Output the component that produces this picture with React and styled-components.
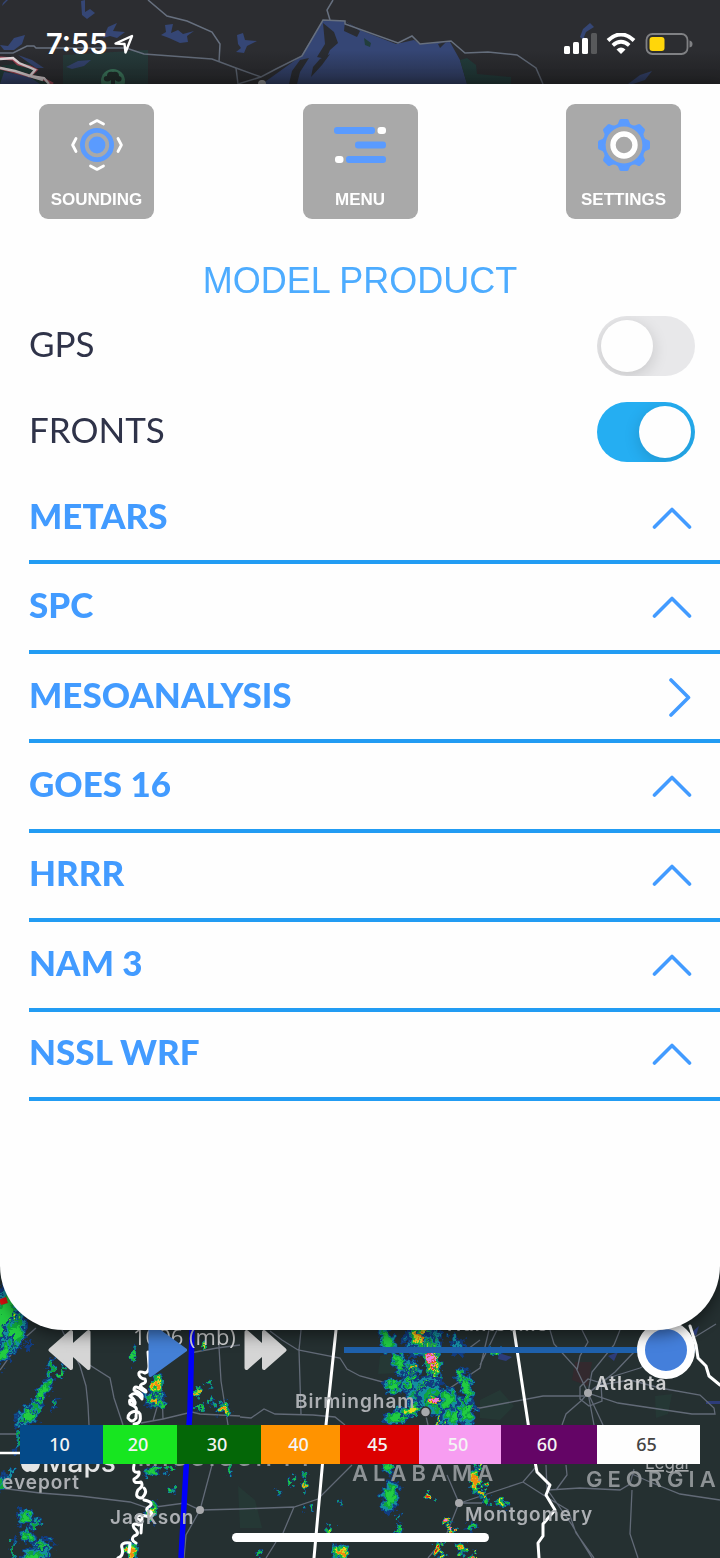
import React, { useState } from 'react';
import styled, { createGlobalStyle } from 'styled-components';

const GlobalStyle = createGlobalStyle`
  body {
    margin: 0;
    background: #253031;
    font-family: 'Liberation Sans', Arial, sans-serif;
  }

  *, *::before, *::after {
    box-sizing: border-box;
  }
`;

const Screen = styled.div`
  display: flex;
  flex-direction: column;
  min-height: 100vh;
  overflow: hidden;
`;

const MapLayer = styled.svg`
  position: absolute;
  inset: 0;
  width: 100%;
  height: 100%;
  font-family: Inter, sans-serif;
  font-weight: 600;
`;

const StatusBar = styled.header`
  position: relative;
  display: flex;
  justify-content: space-between;
  height: 84px;
  padding: 28px 27px 0 46px;
  background: #2c2d31;
`;

const StatusGroup = styled.div`
  position: relative;
  display: flex;
  align-items: center;
  gap: ${props => props.$gap}px;
  height: 32px;
`;

const Clock = styled.time`
  font-family: Inter, sans-serif;
  font-weight: 600;
  font-size: 29px;
  line-height: 32px;
  color: #fff;
`;

const Panel = styled.main`
  position: relative;
  z-index: 1;
  padding: 20px 0 229px;
  border-radius: 0 0 64px 64px;
  background: #fefefe;
  box-shadow: 0 4px 16px rgba(0, 0, 0, 0.5);
`;

const Toolbar = styled.nav`
  display: flex;
  justify-content: space-between;
  padding: 0 39px;
`;

const ToolButton = styled.button`
  display: flex;
  flex-direction: column;
  align-items: center;
  justify-content: space-between;
  width: 115px;
  height: 115px;
  padding: 15px 0 8px;
  border: 0;
  border-radius: 9px;
  background: #a9a9a9;
  color: #fff;
  font-family: inherit;
  font-weight: bold;
  font-size: 17px;
  line-height: 22px;
`;

const Title = styled.h1`
  margin: 41px 0 1px;
  font-weight: normal;
  font-size: 36px;
  line-height: 42px;
  text-align: center;
  color: #4dacff;
`;

const SwitchRow = styled.label`
  display: flex;
  align-items: center;
  justify-content: space-between;
  height: 86px;
  padding: 0 25px 0 29px;
  color: #2f3349;
`;

const RowText = styled.span`
  padding-bottom: 6px;
  font-family: Lato, sans-serif;
  font-weight: ${props => (props.$heavy ? 900 : 400)};
  font-size: 35px;
  line-height: 42px;
`;

const Switch = styled.input`
  appearance: none;
  display: flex;
  align-items: center;
  width: 98px;
  height: 60px;
  margin: 0;
  padding: 0 4px;
  border-radius: 30px;
  background: #e8e8ea;
  overflow: hidden;

  &::before {
    content: '';
    width: 52px;
    height: 52px;
    border-radius: 50%;
    background: #fefefe;
    box-shadow: 0 4px 16px rgba(0, 0, 0, 0.15);
  }

  &:checked {
    justify-content: flex-end;
    background: #25aef2;
  }
`;

const ProductList = styled.div`
  display: grid;
  grid-auto-rows: 1fr;
  min-height: 626px;
  padding-left: 29px;
`;

const ProductRow = styled.button`
  display: flex;
  align-items: center;
  justify-content: space-between;
  padding: 0 28px 0 0;
  border: 0;
  border-bottom: 4px solid #229cf3;
  background: none;
  color: #429bff;
`;

const Dock = styled.footer`
  position: relative;
  display: flex;
  flex: 1;
  flex-direction: column;
  margin-top: -70px;
  padding: 61px 0 16px;
  background: #253031;
`;

const Player = styled.div`
  position: relative;
  display: flex;
  align-items: center;
  gap: 57px;
  padding: 0 25px 0 48px;
`;

const PlayerButton = styled.button`
  display: flex;
  padding: 0;
  border: 0;
  background: none;
  color: ${props => (props.$active ? '#4480d6' : '#d5d5d5')};
`;

const Timeline = styled.input`
  appearance: none;
  flex: 1;
  min-width: 0;
  height: 58px;
  margin: 0;
  background: none;

  &::-webkit-slider-runnable-track {
    height: 58px;
    background: linear-gradient(#1f61ad, #1f61ad) center / 100% 6px no-repeat;
  }

  &::-webkit-slider-thumb {
    appearance: none;
    width: 58px;
    height: 58px;
    border: 8px solid #fff;
    border-radius: 50%;
    background: #447fdb;
  }
`;

const Legend = styled.ul`
  position: relative;
  display: flex;
  height: 39px;
  margin: 46px 20px 0;
  padding: 0;
  list-style: none;
`;

const LegendItem = styled.li`
  flex: ${props => props.$span} 1 0;
  background: ${props => props.$fill};
  color: ${props => props.$ink || '#f4f4f4'};
  font-family: 'Noto Sans', sans-serif;
  font-weight: 500;
  font-size: 18px;
  line-height: 39px;
  text-align: center;
  text-indent: -4px;
`;

const HomeIndicator = styled.div`
  position: relative;
  width: 257px;
  height: 9px;
  margin: auto auto 0;
  border-radius: 5px;
  background: #fff;
`;

const SoundingIcon = () => (
  <svg width="52" height="52" viewBox="0 0 52 52" fill="none" aria-hidden="true">
    <circle cx="26" cy="26" r="14.6" stroke="#5a9bff" strokeWidth="4.8" />
    <circle cx="26" cy="26" r="8.4" fill="#5a9bff" />
    <g stroke="#fff" strokeWidth="2.8" strokeLinecap="round" strokeLinejoin="round">
      <path d="M19.5 5 26 1.6 32.5 5" />
      <path d="M19.5 47 26 50.4 32.5 47" />
      <path d="M5 19.500 1.600 26 5 32.500" />
      <path d="M47 19.500 50.400 26 47 32.500" />
    </g>
  </svg>
);

const MenuIcon = () => (
  <svg width="52" height="52" viewBox="0 0 52 52" aria-hidden="true">
    <g fill="#5a9bff">
      <rect y="8" width="41" height="7" rx="3" />
      <rect x="21" y="22.5" width="31" height="7" rx="3" />
      <rect x="12" y="37" width="40" height="7" rx="3" />
    </g>
    <g fill="#fff">
      <rect x="43.5" y="8" width="8.5" height="7" rx="3" />
      <rect x="1" y="37" width="8.5" height="7" rx="3" />
    </g>
  </svg>
);

const SettingsIcon = () => (
  <svg width="52" height="52" viewBox="0 0 52 52" aria-hidden="true">
    <g fill="#5a9bff">
      {[0, 45, 90, 135, 180, 225, 270, 315].map(angle => (
        <path
          key={angle}
          transform={`rotate(${angle} 26 26)`}
          d="M18 6 Q20.5 5 21 2 Q21.5 0 23 0 H29 Q30.5 0 31 2 Q31.5 5 34 6 V9 H18Z"
        />
      ))}
    </g>
    <circle cx="26" cy="26" r="19.6" fill="none" stroke="#5a9bff" strokeWidth="3.5" />
    <circle cx="26" cy="26" r="18.4" fill="#a9a9a9" />
    <circle cx="26" cy="26" r="11" fill="none" stroke="#fff" strokeWidth="5.4" />
  </svg>
);

const Chevron = ({ direction }) => (
  <svg width="40" height="40" viewBox="0 0 40 40" fill="none" aria-hidden="true">
    <path
      d={direction === 'up' ? 'M2.5 29 20 11.5 37.5 29' : 'M19 3 36.5 20.5 19 38'}
      stroke="#429bff"
      strokeWidth="3.6"
      strokeLinecap="round"
      strokeLinejoin="round"
    />
  </svg>
);

const LocationIcon = () => (
  <svg width="20" height="20" viewBox="0 0 20 20" fill="none" aria-hidden="true">
    <path
      d="M1.5 9.5 18 2 11.500 18.500 10.500 10Z"
      stroke="#fff"
      strokeWidth="2.4"
      strokeLinejoin="round"
    />
  </svg>
);

const SignalIcon = () => (
  <svg width="33" height="22" viewBox="0 0 33 22" fill="#fff" aria-hidden="true">
    <rect y="13" width="6" height="8" rx="1.5" />
    <rect x="9" y="9" width="6" height="12" rx="1.5" />
    <rect x="18" y="5" width="6" height="16" rx="1.5" />
    <rect x="27" width="6" height="21" rx="1.5" fill="#58595b" />
  </svg>
);

const WifiIcon = () => (
  <svg width="30" height="22" viewBox="0 0 30 22" fill="none" aria-hidden="true">
    <path d="M2 7.5 Q15-4.5 28 7.5" stroke="#fff" strokeWidth="4" />
    <path d="M6.800 12.300 Q15 5 23.200 12.300" stroke="#fff" strokeWidth="3.800" />
    <path d="M10.5 16.5 Q15 12.5 19.5 16.5 L15 21Z" fill="#fff" />
  </svg>
);

const BatteryIcon = () => (
  <svg width="48" height="22" viewBox="0 0 48 22" aria-hidden="true">
    <rect x="1.5" y="1" width="41" height="20" rx="6" fill="none" stroke="#808184" strokeWidth="1.8" />
    <rect x="4.5" y="4" width="15" height="14" rx="3" fill="#ffd60a" />
    <path d="M44.5 7.5 Q47.5 8 47.5 11 T44.5 14.5Z" fill="#808184" />
  </svg>
);

const RewindIcon = () => (
  <svg width="43" height="42" viewBox="0 0 43 42" fill="currentColor" stroke="currentColor" strokeWidth="4" strokeLinejoin="round" aria-hidden="true">
    <path d="M2.5 21 23 3V39Z" />
    <path d="M20 21 40.5 3V39Z" />
  </svg>
);

const PlayIcon = () => (
  <svg width="39" height="56" viewBox="0 0 39 56" fill="currentColor" stroke="currentColor" strokeWidth="4" strokeLinejoin="round" aria-hidden="true">
    <path d="M2.5 3V53L37 28Z" />
  </svg>
);

const ForwardIcon = () => (
  <svg width="43" height="42" viewBox="0 0 43 42" fill="currentColor" stroke="currentColor" strokeWidth="4" strokeLinejoin="round" aria-hidden="true">
    <path d="M2.5 3V39L23 21Z" />
    <path d="M20 3V39L40.5 21Z" />
  </svg>
);

const NorthMap = () => (
  <MapLayer viewBox="0 0 720 84" preserveAspectRatio="xMidYMax slice" aria-hidden="true">
    <defs>
      <linearGradient id="shade" x1="0" y1="0" x2="0" y2="1">
        <stop offset="0.6" stopColor="#111" stopOpacity="0" />
        <stop offset="1" stopColor="#111" stopOpacity="0.45" />
      </linearGradient>
    </defs>
    <path d="M63 55 148 50V84H63Z" fill="#263b3b" />
    <path d="M0 66 30 62 36 76 50 84H0Z" fill="#203c38" />
    <g fill="#354675">
      <path d="M323 20 345 21 360 30 396 44 414 40 420 44 450 42 460 60 467 84H262L301 56 323 20Z" />
      <path d="M81 1 85 0 85 12 90 9 95 13 87 19 82 15Z" />
      <path d="M103 38 108 27 117 23 113 31 125 32 117 38 110 36Z" />
      <path d="M161 35 166 32 165 25 173 24 171 33 178 30 183 34 194 31 187 36 188 42 180 43 169 38Z" />
      <path d="M236 52 241 48 238 44 237 35 243 33 245 40 257 41 247 46 244 53Z" />
      <path d="M8 46 14 38 25 35 22 44 14 50 4 50 0 45Z" />
      <path d="M66 67 78 61 91 60 84 66 72 69Z" />
      <path d="M4 72 28 76 40 84H0ZM18 55 32 60 44 68 36 68Z" />
      <path d="M580 37 583 29 590 23 594 27 586 32 584 37 586 42Z" />
      <path d="M628 84 640 75 652 71 645 80 633 84Z" />
      <path d="M2 6 8 0H6L3 3Z" />
    </g>
    <g fill="#2a2c31">
      <path d="M323 23 334 32 338 43 330 50 326 59 317 57 325 44Z" />
      <path d="M300 60 309 58 300 72 297 84H289L292 71Z" />
      <path d="M345 21 360 31 357 37 344 31ZM320 59 330 54 322 65 311 77 313 67ZM438 44 446 42 440 48Z" />
    </g>
    <path d="M460 60 467 58 476 65 477 74 511 77V84H467ZM364 38 371 43 370 47 365 45Z" fill="#223e3d" />
    <g fill="none" stroke="#67707f" strokeWidth="1.5">
      <path d="M148 0 167 16 187 21 212 32 220 44 219 62" />
      <path d="M0 53H13L27 46H34L36 48H126L144 54 212 59 236 68 261 77 276 69 302 56 323 20 345 21V24L398 43 412 36 420 44 451 41 465 53 488 52 517 55 536 68 543 84" />
      <path d="M333 0 327 10 330 20M236 68 238 84 261 77" />
    </g>
    <path d="M0 58 13 59 18 64 30 67 36 70 30 76 43 79 53 84M0 68 15 72 30 76 43 79" fill="none" stroke="#b54a5c" strokeWidth="3" />
    <path d="M0 59 13 58 19 63 31 68 35 70 30 76 44 78 49 84M0 68 15 71 30 76 43 80" fill="none" stroke="#f3eaec" strokeWidth="2.4" />
    <circle cx="113" cy="81" r="12" fill="#3f8264" />
    <path d="M104 80 Q103 76 107 76 Q107 71 113 72 Q119 71 119 76 Q123 77 121 81 Q118 83 115 80 L115 84H111V80 Q107 83 104 80Z" fill="#202e2b" />
    <circle cx="262" cy="84" r="4" fill="#a9abae" />
    <rect width="720" height="84" fill="url(#shade)" />
  </MapLayer>
);

const LEVELS = ['#123c80', '#1490a0', '#10a53c', '#22cc42', '#e8d820', '#f08a10', '#d81818', '#ee80dc'];

// x, y, rx, ry, rotation, strength (index of the innermost colour)
const CELLS = [
  [4, 58, 14, 34, 20, 3],
  [14, 75, 9, 20, 20, 3],
  [16, 58, 3, 4, 20, 4],
  [3, 94, 5, 16, 30, 3],
  [42, 134, 5, 18, 30, 3],
  [28, 156, 8, 11, 50, 3],
  [35, 147, 4, 6, 50, 2],
  [51, 108, 3, 9, 10, 2],
  [62, 112, 2, 6, 10, 3],
  [19, 176, 2, 14, 15, 2],
  [55, 143, 2, 6, 30, 2],
  [28, 84, 2, 6, 20, 0],
  [133, 96, 2, 8, 0, 3],
  [154, 138, 8, 7, 10, 3],
  [156, 141, 4, 4, 10, 5],
  [157, 125, 5, 9, 5, 5],
  [162, 144, 4, 3, 150, 3],
  [25, 257, 7, 7, 70, 3],
  [28, 277, 5, 7, 120, 3],
  [35, 264, 6, 3, 130, 2],
  [42, 290, 10, 8, 150, 3],
  [34, 298, 12, 8, 150, 3],
  [13, 290, 2, 11, 10, 2],
  [10, 214, 2, 7, 40, 1],
  [2, 222, 3, 8, 20, 2],
  [152, 252, 4, 10, 10, 4],
  [131, 292, 5, 9, 10, 5],
  [172, 230, 3, 4, 20, 3],
  [152, 211, 8, 3, 160, 3],
  [170, 209, 4, 2, 160, 3],
  [198, 132, 3, 4, 0, 5],
  [222, 149, 5, 6, 50, 5],
  [209, 124, 2, 2, 0, 3],
  [211, 140, 3, 3, 0, 3],
  [198, 148, 4, 2, 0, 3],
  [204, 85, 2, 5, 0, 4],
  [230, 208, 2, 5, 0, 3],
  [387, 80, 6, 13, 345, 3],
  [399, 103, 6, 11, 335, 3],
  [412, 110, 6, 9, 340, 3],
  [413, 108, 3, 3, 0, 5],
  [423, 80, 15, 15, 340, 4],
  [421, 76, 11, 12, 330, 5],
  [426, 74, 5, 8, 340, 6],
  [432, 100, 6, 24, 350, 6],
  [431, 98, 3, 16, 352, 7],
  [394, 127, 9, 5, 10, 3],
  [412, 124, 9, 9, 30, 3],
  [424, 132, 16, 12, 140, 3],
  [421, 129, 3, 8, 40, 5],
  [436, 140, 16, 13, 20, 3],
  [434, 140, 6, 5, 140, 7],
  [446, 133, 4, 5, 10, 6],
  [448, 140, 9, 9, 0, 3],
  [397, 157, 13, 6, 165, 3],
  [412, 150, 10, 5, 165, 4],
  [441, 159, 4, 6, 0, 5],
  [455, 156, 12, 8, 170, 3],
  [467, 150, 7, 14, 0, 3],
  [466, 127, 5, 16, 350, 3],
  [460, 115, 4, 6, 20, 3],
  [459, 88, 4, 8, 0, 1],
  [454, 78, 3, 5, 0, 1],
  [389, 206, 5, 7, 0, 3],
  [390, 236, 7, 15, 10, 3],
  [398, 258, 2, 4, 0, 2],
  [399, 271, 2, 4, 0, 3],
  [428, 237, 4, 4, 0, 6],
  [475, 221, 4, 12, 350, 5],
  [487, 224, 4, 4, 0, 6],
  [483, 235, 3, 3, 0, 5],
  [486, 242, 3, 4, 330, 3],
  [502, 244, 5, 4, 30, 4],
  [478, 206, 4, 3, 0, 4],
  [494, 91, 6, 3, 10, 4],
  [304, 226, 3, 4, 0, 5],
  [291, 220, 2, 4, 0, 3],
  [306, 216, 2, 3, 0, 2],
  [311, 248, 3, 3, 0, 3],
  [329, 270, 3, 3, 0, 4],
  [445, 261, 3, 4, 330, 7],
  [452, 269, 3, 6, 340, 7],
  [470, 268, 4, 4, 0, 3],
  [438, 288, 3, 6, 0, 6],
  [461, 287, 4, 6, 340, 5],
  [475, 297, 4, 3, 0, 7],
  [442, 297, 3, 4, 0, 4],
  [341, 293, 7, 9, 0, 5],
  [259, 294, 3, 3, 0, 3],
  [278, 233, 2, 3, 0, 2],
  [340, 241, 2, 2, 0, 2],
];

const StormCell = ({ cell: [x, y, rx, ry, turn, strength] }) => (
  <g transform={`translate(${x} ${y}) rotate(${turn})`}>
    {LEVELS.slice(0, strength + 1).map((fill, i) => {
      const size = 1.3 - i / (strength + 1);
      return <ellipse key={fill} rx={rx * size} ry={ry * size} fill={fill} />;
    })}
  </g>
);

const CITIES = [
  [588, 133],
  [459, 243],
  [200, 250],
];

const SouthMap = () => (
  <MapLayer viewBox="0 0 720 298" preserveAspectRatio="xMidYMid slice">
    <defs>
      <filter id="rough" x="-5%" y="-5%" width="110%" height="110%" colorInterpolationFilters="sRGB">
        <feTurbulence type="fractalNoise" baseFrequency="0.16" numOctaves="3" seed="4" />
        <feDisplacementMap in="SourceGraphic" scale="15" xChannelSelector="R" yChannelSelector="G" />
      </filter>
    </defs>
    <g fill="#25403a" opacity="0.5">
      <path d="M238 226 255 240 262 268H240ZM380 96 396 92 420 112 378 114ZM480 140 500 130 514 146 500 160 480 158ZM655 136 672 134 668 154 656 158Z" />
    </g>
    <path d="M575 102H592L588 126 572 120Z" fill="#33292e" />
    <path d="M499 93 512 97 506 101 498 99ZM608 96 618 92 614 101ZM692 72 699 66 696 76ZM706 141H720V144H706Z" fill="#2d3c79" />
    <g fill="none" stroke="#626a77" strokeWidth="1.3">
      <path d="M0 110 20 82 36 68M62 70 80 106 86 126 88 145 89 165M88 104 110 118 114 138 123 165M0 174H20" />
      <path d="M141 163 163 159 192 152 200 154 240 156M163 159 162 130 153 161M190 93 217 88 240 85M218 70 221 121 228 165" />
      <path d="M0 228 40 233 80 236 130 242 148 248 185 243 200 250 240 249 294 247 318 239 352 205M200 250 212 205M200 250 186 275 184 298M294 247 283 273M276 282 266 298" />
      <path d="M270 71 282 80 298 90 340 98 347 109 360 116 390 124M301 70 299 90 301 154M240 157 251 158 264 149 275 154 313 155 335 157 345 165" />
      <path d="M432 148H480L543 136 584 136M425 152 428 165M447 130 480 108 489 70M460 95 480 80M480 105 497 70" />
      <path d="M550 70 554 84 576 108 588 133 582 140 566 154 562 165M577 110 580 96 588 82 582 70M588 133 594 165M588 133 603 165M588 133 592 112 614 85 620 70M588 133 608 118 640 108 690 80 716 64M588 133 615 112 634 92 650 70M588 133 600 125 630 120 660 128 700 135 714 148 715 154 692 154 618 143ZM580 127 588 119 601 123 602 141 589 146 580 139Z" />
      <path d="M459 243 447 215M459 243 445 278 428 298M459 243H482M460 243 523 222 535 208M523 222 548 238 568 250 576 273 594 298M548 230 580 228 620 230 630 224 634 209M566 205 567 215 556 230M546 205 547 229 572 265 582 282 592 298M632 230 630 274 638 298M632 214 650 222 680 234 720 240" />
    </g>
    <g filter="url(#rough)">
      {CELLS.map((cell, i) => (
        <StormCell key={i} cell={cell} />
      ))}
    </g>
    <path d="M0 42 7 40" stroke="#e01010" strokeWidth="6" />
    <path d="M0 193H20" stroke="#fff" strokeWidth="2.5" />
    <g fill="none" stroke="#fff" strokeWidth="3" strokeLinejoin="round" strokeLinecap="round">
      <path d="M336 70 326 165 314 298" />
      <path d="M514 70 530 176 537 212 550 225 546 235 555 250 543 264 543 276 538 283 539 298" />
      <path d="M690 66 696 85 698 98 706 106 709 116 720 125" />
      <path d="M148 92 149 106Q149 112 145 113Q138 110 139 115Q141 119 145 119Q147 123 142 124Q138 126 145 130Q148 134 142 130Q134 124 134 130Q144 134 142 139Q136 130 130 136Q136 140 135 144Q128 136 130 144Q138 147 136 151Q128 152 128 158Q132 164 136 158Q136 148 140 154Q142 164 134 164" />
      <path d="M134 205Q132 214 139 212Q140 216 134 219Q133 224 141 222Q144 226 138 230Q134 238 142 238Q148 232 144 228M144 240Q154 242 150 246Q143 250 151 252Q154 258 146 256Q136 254 136 258Q145 262 139 265Q131 262 134 268Q141 274 134 276Q130 280 136 283M142 258 141 273M130 283Q120 282 122 288Q124 296 118 298M130 284 129 292" />
    </g>
    <path d="M192 70 190 150 186 210 181 298" fill="none" stroke="#0000fb" strokeWidth="5.5" />
    <g fill="#a8a9ac">
      <circle cx="425.5" cy="152" r="5" stroke="#2b3033" strokeWidth="1.5" />
      {CITIES.map(([x, y]) => (
        <circle key={x} cx={x} cy={y} r="4" />
      ))}
    </g>
    <g fill="#acafb3" fontSize="19" letterSpacing="1">
      <text x="447" y="71">Huntsville</text>
      <text x="295" y="148">Birmingham</text>
      <text x="595" y="130" fill="#cdced0">Atlanta</text>
      <text x="465" y="261">Montgomery</text>
      <text x="110" y="264">Jackson</text>
      <text x="2" y="229">eveport</text>
    </g>
    <g fill="#8d9295" fontSize="22">
      <text x="138" y="206" letterSpacing="4">MISSISSIPPI</text>
      <text x="352" y="221" letterSpacing="5">ALABAMA</text>
      <text x="586" y="227" letterSpacing="5">GEORGIA</text>
    </g>
    <g fill="#e4e5e6">
      <path d="M21 203H40Q40 208 36 211Q34 213 30 211Q27 213 25 211Q21 208 21 203Z" />
      <text x="42" y="212" fontSize="28" fontWeight="500">Maps</text>
      <text x="645" y="209" fontSize="17" fontWeight="400" textDecoration="underline" fill="#a5a8aa">Legal</text>
      <text x="133" y="85" fontSize="22" fontWeight="400" fill="#d0d1d2" fontFamily="Open Sans">1006 (mb)</text>
    </g>
  </MapLayer>
);

const PRODUCTS = [
  { name: 'METARS', direction: 'up' },
  { name: 'SPC', direction: 'up' },
  { name: 'MESOANALYSIS', direction: 'right' },
  { name: 'GOES 16', direction: 'up' },
  { name: 'HRRR', direction: 'up' },
  { name: 'NAM 3', direction: 'up' },
  { name: 'NSSL WRF', direction: 'up' },
];

const SCALE = [
  { value: 10, span: 83, fill: '#044a89' },
  { value: 20, span: 74, fill: '#17e620' },
  { value: 30, span: 84, fill: '#046707' },
  { value: 40, span: 79, fill: '#ff9300' },
  { value: 45, span: 79, fill: '#dc0000' },
  { value: 50, span: 82, fill: '#f79df1' },
  { value: 60, span: 96, fill: '#640566' },
  { value: 65, span: 103, fill: '#fefefe', ink: '#444' },
];

export default function App() {
  const [gps, setGps] = useState(false);
  const [fronts, setFronts] = useState(true);

  return (
    <Screen>
      <GlobalStyle />
      <StatusBar>
        <NorthMap />
        <StatusGroup $gap={7}>
          <Clock>7:55</Clock>
          <LocationIcon />
        </StatusGroup>
        <StatusGroup $gap={9}>
          <SignalIcon />
          <WifiIcon />
          <BatteryIcon />
        </StatusGroup>
      </StatusBar>
      <Panel>
        <Toolbar>
          <ToolButton>
            <SoundingIcon />
            SOUNDING
          </ToolButton>
          <ToolButton>
            <MenuIcon />
            MENU
          </ToolButton>
          <ToolButton>
            <SettingsIcon />
            SETTINGS
          </ToolButton>
        </Toolbar>
        <Title>MODEL PRODUCT</Title>
        <SwitchRow>
          <RowText>GPS</RowText>
          <Switch type="checkbox" checked={gps} onChange={() => setGps(!gps)} />
        </SwitchRow>
        <SwitchRow>
          <RowText>FRONTS</RowText>
          <Switch type="checkbox" checked={fronts} onChange={() => setFronts(!fronts)} />
        </SwitchRow>
        <ProductList>
          {PRODUCTS.map(({ name, direction }) => (
            <ProductRow key={name}>
              <RowText $heavy>{name}</RowText>
              <Chevron direction={direction} />
            </ProductRow>
          ))}
        </ProductList>
      </Panel>
      <Dock>
        <SouthMap />
        <Player>
          <PlayerButton aria-label="Previous frame">
            <RewindIcon />
          </PlayerButton>
          <PlayerButton $active aria-label="Play">
            <PlayIcon />
          </PlayerButton>
          <PlayerButton aria-label="Next frame">
            <ForwardIcon />
          </PlayerButton>
          <Timeline type="range" defaultValue="100" aria-label="Frame" />
        </Player>
        <Legend>
          {SCALE.map(({ value, span, fill, ink }) => (
            <LegendItem key={value} $span={span} $fill={fill} $ink={ink}>
              {value}
            </LegendItem>
          ))}
        </Legend>
        <HomeIndicator />
      </Dock>
    </Screen>
  );
}
